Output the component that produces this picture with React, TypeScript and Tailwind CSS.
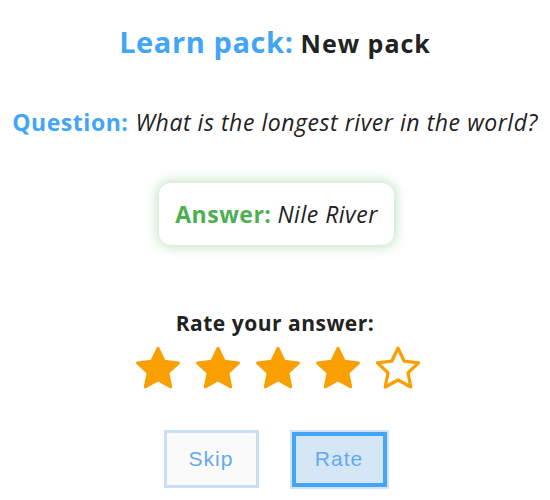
import React from "react";

const Star = ({ filled }: { filled: boolean }) => (
  <svg width="52" height="52" viewBox="0 0 24 24">
    <path
      d="M12 2.4l2.9 6 6.6.8-4.9 4.55 1.3 6.55L12 17.1l-5.9 3.2 1.3-6.55-4.9-4.55 6.6-.8z"
      fill={filled ? "#f9a000" : "none"}
      stroke="#f9a000"
      strokeWidth={filled ? 1.3 : 1.5}
      strokeLinejoin="round"
    />
  </svg>
);

export default function App() {
  return (
    <div className="w-[550px] h-[500px] bg-white flex flex-col items-center leading-[1.5]" style={{ fontFamily: "'Open Sans', 'Noto Sans', sans-serif" }}>
      <div className="mt-[20px] flex items-baseline gap-[7px]">
        <span className="text-[29px] font-bold text-[#42a5f5] tracking-[0.6px]">Learn pack:</span>
        <span className="text-[25px] font-bold text-[#222] tracking-[1px]">New pack</span>
      </div>
      <div className="mt-[41px] flex items-baseline gap-[7px] text-[23px] tracking-[0.55px]">
        <span className="font-bold text-[#42a5f5]">Question:</span>
        <span className="italic text-[#222]">What is the longest river in the world?</span>
      </div>
      <div className="mt-[44px] ml-[3px] bg-white rounded-[12px] px-[16px] h-[62px] flex items-center gap-[6px] text-[23px] tracking-[0.5px] shadow-[0_0_12px_2px_rgba(76,175,80,0.35)]">
        <span className="font-bold text-[#4caf50]">Answer:</span>
        <span className="italic text-[#222]">Nile River</span>
      </div>
      <div className="mt-[63px] text-[21px] font-bold text-[#222] tracking-[0.5px]">Rate your answer:</div>
      <div className="mt-[3px] ml-[6px] flex gap-[8px]">
        <Star filled />
        <Star filled />
        <Star filled />
        <Star filled />
        <Star filled={false} />
      </div>
      <div className="mt-[35px] flex gap-[33px]" style={{ fontFamily: "'Liberation Sans', Arial, sans-serif" }}>
        <button className="w-[95px] h-[58px] border-[3px] border-[#c8dff5] bg-[#fafafa] text-[#62a9f2] text-[21px] tracking-[1px]">Skip</button>
        <button className="w-[95px] h-[55px] mt-[2px] border-[4px] border-[#42a5f5] bg-[#d5e6f7] text-[#62a9f2] text-[21px] tracking-[1px] shadow-[0_0_0_2px_#d0e4f7]">Rate</button>
      </div>
    </div>
  );
}
